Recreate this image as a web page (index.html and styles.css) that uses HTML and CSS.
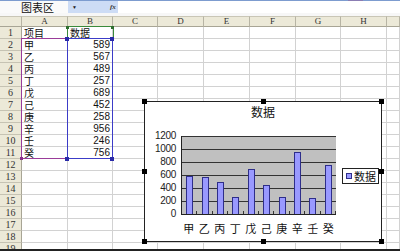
FILE: index.html
```html
<!DOCTYPE html>
<html>
<head>
<meta charset="utf-8">
<link rel="stylesheet" href="styles.css">
</head>
<body>
<div class="app">
  <div class="topline"><span class="mark"></span></div>
  <div class="fbar">
    <div class="namebox">图表区</div>
    <div class="drop"><span class="arrow">▼</span></div>
    <div class="fx">fx</div>
    <div class="input"></div>
  </div>
  <div class="gap"></div>
  <div class="sheet">
    <div class="grid">
      <div class="h"></div><div class="h">A</div><div class="h">B</div><div class="h">C</div><div class="h">D</div><div class="h">E</div><div class="h">F</div><div class="h">G</div><div class="h">H</div><div class="h"></div>
      <div class="rh">1</div><div class="t">项目</div><div class="t">数据</div><div></div><div></div><div></div><div></div><div></div><div></div><div></div>
      <div class="rh">2</div><div class="t">甲</div><div class="n">589</div><div></div><div></div><div></div><div></div><div></div><div></div><div></div>
      <div class="rh">3</div><div class="t">乙</div><div class="n">567</div><div></div><div></div><div></div><div></div><div></div><div></div><div></div>
      <div class="rh">4</div><div class="t">丙</div><div class="n">489</div><div></div><div></div><div></div><div></div><div></div><div></div><div></div>
      <div class="rh">5</div><div class="t">丁</div><div class="n">257</div><div></div><div></div><div></div><div></div><div></div><div></div><div></div>
      <div class="rh">6</div><div class="t">戊</div><div class="n">689</div><div></div><div></div><div></div><div></div><div></div><div></div><div></div>
      <div class="rh">7</div><div class="t">己</div><div class="n">452</div><div></div><div></div><div></div><div></div><div></div><div></div><div></div>
      <div class="rh">8</div><div class="t">庚</div><div class="n">258</div><div></div><div></div><div></div><div></div><div></div><div></div><div></div>
      <div class="rh">9</div><div class="t">辛</div><div class="n">956</div><div></div><div></div><div></div><div></div><div></div><div></div><div></div>
      <div class="rh">10</div><div class="t">壬</div><div class="n">246</div><div></div><div></div><div></div><div></div><div></div><div></div><div></div>
      <div class="rh">11</div><div class="t">癸</div><div class="n">756</div><div></div><div></div><div></div><div></div><div></div><div></div><div></div>
      <div class="rh">12</div><div></div><div></div><div></div><div></div><div></div><div></div><div></div><div></div><div></div>
      <div class="rh">13</div><div></div><div></div><div></div><div></div><div></div><div></div><div></div><div></div><div></div>
      <div class="rh">14</div><div></div><div></div><div></div><div></div><div></div><div></div><div></div><div></div><div></div>
      <div class="rh">15</div><div></div><div></div><div></div><div></div><div></div><div></div><div></div><div></div><div></div>
      <div class="rh">16</div><div></div><div></div><div></div><div></div><div></div><div></div><div></div><div></div><div></div>
      <div class="rh">17</div><div></div><div></div><div></div><div></div><div></div><div></div><div></div><div></div><div></div>
      <div class="rh">18</div><div></div><div></div><div></div><div></div><div></div><div></div><div></div><div></div><div></div>
      <div class="rh">19</div><div></div><div></div><div></div><div></div><div></div><div></div><div></div><div></div><div></div>
    </div>

    <div class="range r-name"></div>
    <div class="range r-cat"></div>
    <div class="range r-val"></div>
    <span class="dot d1"></span><span class="dot d2"></span><span class="dot d3"></span><span class="dot d4"></span>
    <span class="dot g1"></span><span class="dot g2"></span><span class="dot p1"></span>

    <div class="chart">
      <div class="title">数据</div>
      <div class="yaxis">
        <span>1200</span><span>1000</span><span>800</span><span>600</span><span>400</span><span>200</span><span>0</span>
      </div>
      <div class="plot">
        <div class="slot"><div class="bar" style="height:38px"></div></div>
        <div class="slot"><div class="bar" style="height:37px"></div></div>
        <div class="slot"><div class="bar" style="height:32px"></div></div>
        <div class="slot"><div class="bar" style="height:17px"></div></div>
        <div class="slot"><div class="bar" style="height:45px"></div></div>
        <div class="slot"><div class="bar" style="height:29px"></div></div>
        <div class="slot"><div class="bar" style="height:17px"></div></div>
        <div class="slot"><div class="bar" style="height:62px"></div></div>
        <div class="slot"><div class="bar" style="height:16px"></div></div>
        <div class="slot"><div class="bar" style="height:49px"></div></div>
      </div>
      <div class="legend"><span class="swatch"></span><span class="ltext">数据</span></div>
      <div class="xaxis">
        <span>甲</span><span>乙</span><span>丙</span><span>丁</span><span>戊</span><span>己</span><span>庚</span><span>辛</span><span>壬</span><span>癸</span>
      </div>
      <span class="hd h-tl"></span><span class="hd h-tm"></span><span class="hd h-tr"></span>
      <span class="hd h-ml"></span><span class="hd h-mr"></span>
      <span class="hd h-bl"></span><span class="hd h-bm"></span><span class="hd h-br"></span>
    </div>
  </div>
  <div class="bottom"></div>
</div>
</body>
</html>
```

FILE: styles.css
```css
body {
  margin: 0;
  width: 400px;
  height: 251px;
  overflow: hidden;
  background: #fff;
  font-family: "Liberation Sans", "Noto Sans CJK SC", sans-serif;
  color: #000;
}

.app {
  display: flex;
  flex-direction: column;
  height: 251px;
}

.topline {
  height: 1px;
  background: #7d9ccf;
  display: flex;
}
.topline .mark {
  margin-left: 348px;
  width: 15px;
  height: 2px;
  background: #8b7db3;
}

.fbar {
  height: 12px;
  display: flex;
}
.namebox {
  width: 68px;
  box-sizing: border-box;
  padding-left: 21px;
  background: #fafafa;
  font: 11px/12px "Noto Sans CJK SC", sans-serif;
  color: #111;
  white-space: nowrap;
}
.drop {
  width: 42px;
  background: #cddcf5;
  display: flex;
  align-items: center;
}
.arrow {
  margin-left: 4px;
  font-size: 5px;
  line-height: 5px;
  color: #222;
}
.fx {
  width: 8px;
  background: #cddcf5;
  font: italic bold 7px/12px "Liberation Serif", serif;
  color: #333;
}
.input {
  flex: 1;
  background: #fff;
}

.gap {
  height: 3px;
  background: #f7f7f7;
}

.sheet {
  position: relative;
  height: 233px;
  overflow: hidden;
}

.grid {
  display: grid;
  grid-template-columns: 22px 46px 45px 45px 46px 46px 46px 45px 46px 13px;
  grid-template-rows: 11px;
  grid-auto-rows: 12px;
}
.grid > div {
  box-sizing: border-box;
  border-right: 1px solid #d2d2d2;
  border-bottom: 1px solid #d2d2d2;
  white-space: nowrap;
}
.grid > .h {
  background: #ece9d8;
  border-right-color: #b7b4a4;
  border-bottom-color: #a8a595;
  border-top: 1px solid #c9c6b6;
  text-align: center;
  font: 9px/9px "Liberation Serif", serif;
  color: #333;
}
.grid > .rh {
  background: #ece9d8;
  border-right-color: #a8a595;
  border-bottom-color: #c6c3b3;
  text-align: center;
  font: 10px/11px "Liberation Serif", serif;
  color: #333;
}
.grid > .t {
  padding-left: 2px;
  font: 10px/11px "Noto Sans CJK SC", sans-serif;
  color: #111;
}
.grid > .n {
  padding-right: 2px;
  text-align: right;
  font: 10px/11px "Liberation Sans", sans-serif;
  color: #111;
}

.range {
  position: absolute;
  box-sizing: border-box;
}
.r-name {
  left: 67px; top: 10px; width: 47px; height: 13px;
  border: 1px solid #3a8a3a;
  border-bottom: none;
}
.r-cat {
  left: 21px; top: 22px; width: 47px; height: 121px;
  border: 1px solid #9a3c9a;
}
.r-val {
  left: 67px; top: 22px; width: 46px; height: 121px;
  border: 1px solid #3c3cc8;
}
.dot {
  position: absolute;
  width: 4px;
  height: 4px;
  background: #2a2aa8;
}
.d1 { left: 65px; top: 21px; }
.d2 { left: 110px; top: 21px; }
.d3 { left: 65px; top: 141px; }
.d4 { left: 110px; top: 141px; }
.g1 { left: 66px; top: 10px; width: 3px; height: 3px; background: #2e6e2e; }
.g2 { left: 111px; top: 10px; width: 3px; height: 3px; background: #2e6e2e; }
.p1 { left: 20px; top: 141px; width: 3px; height: 3px; background: #8a308a; }

.chart {
  position: absolute;
  left: 144px;
  top: 85px;
  width: 238px;
  height: 141px;
  box-sizing: border-box;
  border: 1px solid #222;
  background: #fff;
  display: grid;
  grid-template-columns: 36px 155px 1fr;
  grid-template-rows: 34px 79px auto;
}
.title {
  grid-column: 1 / 4;
  text-align: center;
  margin-top: 3px;
  font: 12px/14px "Noto Sans CJK SC", sans-serif;
  color: #111;
}
.yaxis {
  grid-column: 1;
  grid-row: 2;
  display: flex;
  flex-direction: column;
  justify-content: space-between;
  align-items: flex-end;
  margin: -6px 0 -5px;
  padding-right: 5px;
  font: 10px/12px "Liberation Sans", sans-serif;
  letter-spacing: -0.3px;
  color: #222;
}
.plot {
  grid-column: 2;
  grid-row: 2;
  box-sizing: border-box;
  border-left: 1px solid #222;
  border-bottom: 1px solid #222;
  background:
    repeating-linear-gradient(to bottom, #333 0 1px, transparent 1px 13px),
    #c0c0c0;
  display: flex;
  align-items: flex-end;
}
.slot {
  flex: 1;
  height: 100%;
  display: flex;
  align-items: flex-end;
  justify-content: center;
  background: linear-gradient(#333, #333) right bottom / 1px 3px no-repeat;
}
.bar {
  width: 7px;
  box-sizing: border-box;
  background: #9999ff;
  border: 1px solid #2e2e8a;
  border-bottom: none;
}
.legend {
  grid-column: 3;
  grid-row: 2;
  align-self: center;
  justify-self: start;
  margin-left: 6px;
  box-sizing: border-box;
  width: 37px;
  height: 16px;
  border: 1px solid #222;
  display: flex;
  align-items: center;
  gap: 2px;
  padding-left: 3px;
  white-space: nowrap;
  font: 11px/14px "Noto Sans CJK SC", sans-serif;
  color: #111;
}
.swatch {
  flex-shrink: 0;
  box-sizing: border-box;
  width: 6px;
  height: 6px;
  background: #9999ff;
  border: 1px solid #2e2e8a;
}
.ltext {
  flex-shrink: 0;
}
.xaxis {
  grid-column: 2;
  grid-row: 3;
  display: flex;
  margin-top: 6px;
  font: 11px/14px "Noto Sans CJK SC", sans-serif;
  color: #111;
}
.xaxis span {
  flex: 1;
  text-align: center;
}

.hd {
  position: absolute;
  width: 5px;
  height: 5px;
  background: #000;
}
.h-tl { left: -3px; top: -3px; }
.h-tm { left: 116px; top: -3px; }
.h-tr { right: -3px; top: -3px; }
.h-ml { left: -3px; top: 67px; }
.h-mr { right: -3px; top: 67px; }
.h-bl { left: -3px; bottom: -3px; }
.h-bm { left: 116px; bottom: -3px; }
.h-br { right: -3px; bottom: -3px; }

.bottom {
  height: 2px;
  background: #222;
}
```
